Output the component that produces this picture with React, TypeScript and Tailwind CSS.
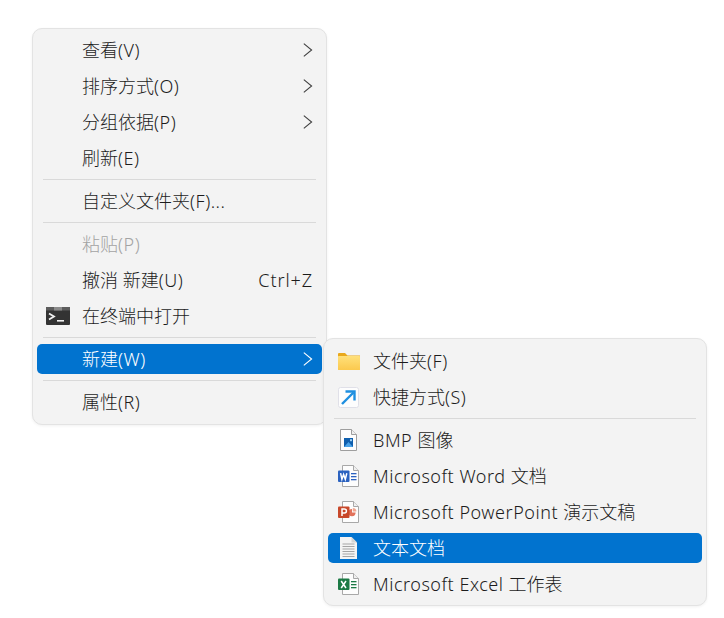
import type { ReactNode } from "react";

const FONT = "font-['Noto_Sans','Noto_Sans_CJK_SC',sans-serif]";

function Chevron() {
  return (
    <svg width="10" height="14" viewBox="0 0 10 14" fill="none" className="stroke-current">
      <path d="M0.8 0.6 L8.6 7 L0.8 13.4" strokeWidth="1.1" />
    </svg>
  );
}

function TerminalIcon() {
  return (
    <svg width="24" height="18" viewBox="0 0 24 18">
      <rect x="0" y="0" width="24" height="18" rx="1" fill="#333333" />
      <rect x="0" y="0" width="24" height="3.5" fill="#5c5c5c" />
      <rect x="8" y="0" width="8" height="3.5" fill="#8a8a8a" />
      <path d="M3 6.5 L8 9.5 L3 12.5" fill="none" stroke="#f0f0f0" strokeWidth="1.8" />
      <rect x="11" y="13" width="7" height="1.6" fill="#f0f0f0" />
    </svg>
  );
}

function FolderIcon() {
  return (
    <svg width="22" height="17" viewBox="0 0 22 17">
      <defs>
        <linearGradient id="folderFill" x1="0" y1="0" x2="0" y2="1">
          <stop offset="0" stopColor="#ffe07a" />
          <stop offset="1" stopColor="#fbc94e" />
        </linearGradient>
      </defs>
      <path d="M0 1 a1 1 0 0 1 1-1 h6 l2.5 2.5 H22 V5 H0 z" fill="#e9a81c" />
      <rect x="0" y="3" width="22" height="14" rx="0.5" fill="url(#folderFill)" />
    </svg>
  );
}

function ShortcutIcon() {
  return (
    <svg width="21" height="21" viewBox="0 0 21 21">
      <rect x="0.5" y="0.5" width="20" height="20" rx="2" fill="#fdfdfd" stroke="#e0e0e8" />
      <path d="M4 17 L15.5 5.5" stroke="#1e8fe0" strokeWidth="2.4" fill="none" />
      <path d="M7.5 4.5 H16.5 V13.5" stroke="#1e8fe0" strokeWidth="2.4" fill="none" />
    </svg>
  );
}

function BmpIcon() {
  return (
    <svg width="17" height="22" viewBox="0 0 17 22">
      <path d="M0.5 0.5 H11.5 L16.5 5.5 V21.5 H0.5 Z" fill="#fdfdfd" stroke="#9e9e9e" />
      <path d="M11.5 0.5 V5.5 H16.5" fill="#efefef" stroke="#9e9e9e" />
      <rect x="4" y="9" width="9" height="9" fill="#0f5fae" />
      <path d="M4 18 L8.5 13 L13 18 Z" fill="#4aa3e8" />
      <rect x="10" y="10.2" width="2" height="2" fill="#9fd2f5" />
    </svg>
  );
}

function OfficeIcon({ kind }: { kind: "word" | "ppt" | "excel" }) {
  const color = kind === "word" ? "#2b62c0" : kind === "ppt" ? "#c8482a" : "#1c7a45";
  const letter = kind === "word"
    ? "M2.6 8.2 L3.9 14.3 L5.6 9.5 L7.3 14.3 L8.8 8.2"
    : kind === "ppt"
      ? "M4 15 V8 H6.4 a2 2 0 0 1 0 4 H4"
      : "M3.2 8 L8 15 M8 8 L3.2 15";
  return (
    <svg width="21" height="22" viewBox="0 0 21 22">
      <path d="M4.5 0.5 H15.5 L20.5 5.5 V21.5 H4.5 Z" fill="#fdfdfd" stroke="#a8a8a8" />
      <path d="M15.5 0.5 V5.5 H20.5" fill="#efefef" stroke="#a8a8a8" />
      {kind === "ppt" ? (
        <>
          <path d="M14 8 a3.6 3.6 0 1 0 3.6 3.6 h-3.6 z" fill="#e2725b" />
          <path d="M14.8 7 a3.6 3.6 0 0 1 3.6 3.6 h-3.6 z" fill="#f0a58f" />
        </>
      ) : (
        <>
          <rect x="13" y="8" width="5.5" height="1.3" fill={color} />
          <rect x="13" y="11" width="5.5" height="1.3" fill={color} />
          <rect x="13" y="14" width="5.5" height="1.3" fill={color} />
        </>
      )}
      <rect x="0" y="5.5" width="11.5" height="11.5" rx="1" fill={color} />
      <path d={letter} fill="none" stroke="#fff" strokeWidth="1.5" />
    </svg>
  );
}

function TextFileIcon() {
  return (
    <svg width="17" height="22" viewBox="0 0 17 22">
      <path d="M0 0 H11.5 L17 5.5 V22 H0 Z" fill="#f4f4f4" />
      <path d="M11.5 0 V5.5 H17" fill="#d4d4d4" />
      {[6.5, 9, 11.5, 14, 16.5, 19].map((y) => (
        <rect key={y} x="2.5" y={y} width="12" height="1" fill="#a5a5a5" />
      ))}
    </svg>
  );
}

// latin runs sit a touch wider than the font gives them
function L({ children }: { children: ReactNode }) {
  return <span className="tracking-[0.52px]">{children}</span>;
}

function Row({
  label,
  icon,
  iconBox,
  right,
  arrow,
  active,
  disabled,
}: {
  label: ReactNode;
  icon?: ReactNode;
  iconBox: string;
  right?: string;
  arrow?: boolean;
  active?: boolean;
  disabled?: boolean;
}) {
  const tone = active
    ? "bg-[#0173cf] text-white"
    : disabled
      ? "text-[#a3a3a3]"
      : "text-[#1c1c1c]";
  return (
    <div className={`mx-1 my-[3px] flex h-[30px] shrink-0 items-center rounded-[5px] pr-[9px] text-[18px] font-light leading-[30px] ${tone}`}>
      <div className={`flex w-[45px] shrink-0 items-center justify-center ${iconBox}`}>{icon}</div>
      <span className="flex-1 whitespace-nowrap">{label}</span>
      {right && <span className="whitespace-nowrap tracking-[0.9px]">{right}</span>}
      {arrow && (
        <span className={active ? "text-white" : "text-[#404040]"}>
          <Chevron />
        </span>
      )}
    </div>
  );
}

function Sep() {
  return (
    <div className="flex h-[7px] shrink-0 items-center px-[10px]">
      <div className="h-px w-full bg-[#d9d9d9]" />
    </div>
  );
}

export default function App() {
  const main = "pr-[3px]";
  const sub = "pr-[4px]";
  return (
    <div className={`relative h-[618px] w-[724px] overflow-hidden bg-white pl-[32px] pt-[28px] ${FONT}`}>
      <div className="box-border flex h-[397px] w-[295px] flex-col rounded-[10px] border border-[#e3e3e3] bg-[#f3f3f3] py-[3px] shadow-[0_1px_3px_rgba(0,0,0,0.06)]">
        <Row iconBox={main} label={<>查看<L>(V)</L></>} arrow />
        <Row iconBox={main} label={<>排序方式<L>(O)</L></>} arrow />
        <Row iconBox={main} label={<>分组依据<L>(P)</L></>} arrow />
        <Row iconBox={main} label={<>刷新<L>(E)</L></>} />
        <Sep />
        <Row iconBox={main} label={<>自定义文件夹<L>(F)...</L></>} />
        <Sep />
        <Row iconBox={main} label={<>粘贴<L>(P)</L></>} disabled />
        <Row iconBox={main} label={<>撤消 新建<L>(U)</L></>} right="Ctrl+Z" />
        <Row iconBox={main} label="在终端中打开" icon={<TerminalIcon />} />
        <Sep />
        <Row iconBox={main} label={<>新建<L>(W)</L></>} arrow active />
        <Sep />
        <Row iconBox={main} label={<>属性<L>(R)</L></>} />
      </div>

      {/* submenu sits over the parent menu's right edge */}
      <div className="absolute left-[323px] top-[338px] box-border flex h-[268px] w-[384px] flex-col rounded-[10px] border border-[#e3e3e3] bg-[#f3f3f3] pb-[3px] pt-[4px] shadow-[0_1px_3px_rgba(0,0,0,0.06)]">
        <Row iconBox={sub} label={<>文件夹<L>(F)</L></>} icon={<FolderIcon />} />
        <Row iconBox={sub} label={<>快捷方式<L>(S)</L></>} icon={<ShortcutIcon />} />
        <Sep />
        <Row iconBox={sub} label={<><L>BMP </L>图像</>} icon={<BmpIcon />} />
        <Row iconBox={sub} label={<><L>Microsoft Word </L>文档</>} icon={<OfficeIcon kind="word" />} />
        <Row iconBox={sub} label={<><L>Microsoft PowerPoint </L>演示文稿</>} icon={<OfficeIcon kind="ppt" />} />
        <Row iconBox={sub} label="文本文档" icon={<TextFileIcon />} active />
        <Row iconBox={sub} label={<><L>Microsoft Excel </L>工作表</>} icon={<OfficeIcon kind="excel" />} />
      </div>
    </div>
  );
}
